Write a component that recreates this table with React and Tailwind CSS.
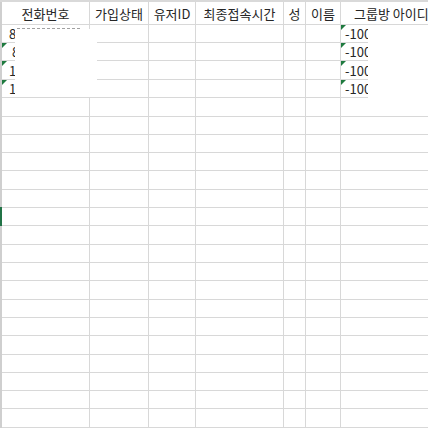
import React from "react";

const rowHeights = [
  "h-[18px]", "h-[18px]", "h-[19px]", "h-[18px]", "h-[19px]", "h-[18px]", "h-[18px]",
  "h-[18px]", "h-[19px]", "h-[18px]", "h-[18px]", "h-[19px]", "h-[18px]", "h-[18px]",
  "h-[19px]", "h-[18px]", "h-[18px]", "h-[19px]", "h-[18px]", "h-[18px]", "h-[18px]",
  "h-[19px]",
];

const colW = ["w-[88px]", "w-[59px]", "w-[47px]", "w-[88px]", "w-[22px]", "w-[35px]"];

const headers = ["전화번호", "가입상태", "유저ID", "최종접속시간", "성", "이름"];

function Tri() {
  return (
    <span className="absolute left-0 top-0 w-0 h-0 border-t-[5px] border-t-[#1f7a3f] border-r-[5px] border-r-transparent" />
  );
}

function Row({ h, a, g }) {
  return (
    <div className={`flex ${h} border-b border-[#d8d8d8]`}>
      <div className={`${colW[0]} shrink-0 border-r border-[#d8d8d8] relative flex items-center`}>
        {a && a.tri && <Tri />}
        {a && <span className={a.pl}>{a.t}</span>}
      </div>
      {colW.slice(1).map((w, i) => (
        <div key={i} className={`${w} shrink-0 border-r border-[#d8d8d8]`} />
      ))}
      <div className="flex-1 relative flex items-center">
        {g && <Tri />}
        {g && <span className="pl-[4px]">-1000000</span>}
      </div>
    </div>
  );
}

export default function App() {
  const data = [
    { a: { t: "8", pl: "pl-[7px]", tri: false }, g: true },
    { a: { t: "8", pl: "pl-[10px]", tri: true }, g: true },
    { a: { t: "1", pl: "pl-[7px]", tri: true }, g: true },
    { a: { t: "1", pl: "pl-[7px]", tri: true }, g: true },
  ];
  return (
    <div
      className="relative w-[428px] h-[428px] overflow-hidden bg-white text-[13px] text-[#262626] leading-none"
      style={{ fontFamily: '"Noto Sans CJK KR", "Noto Sans", sans-serif' }}
    >
      <div className="h-[2px] bg-[#d9d9d9]" />
      <div className="border-l-2 border-[#cfcfcf]">
        <div className="flex h-[23px] border-b border-[#d8d8d8]">
          {headers.map((t, i) => (
            <div
              key={i}
              className={`${colW[i]} shrink-0 border-r border-[#d8d8d8] flex items-center justify-center whitespace-nowrap overflow-hidden`}
            >
              {t}
            </div>
          ))}
          <div className="flex-1 flex items-center pl-[13px] whitespace-nowrap overflow-hidden">
            그룹방 아이디
          </div>
        </div>
        {rowHeights.map((h, i) => (
          <Row key={i} h={h} a={data[i] && data[i].a} g={data[i] && data[i].g} />
        ))}
      </div>

      <div className="absolute left-[15px] top-[29px] w-[82px] h-[68px] bg-white" />
      <div className="absolute left-[17px] top-[28px] w-[63px] border-t border-dashed border-[#a0a0a0]" />
      <div className="absolute left-[368px] top-[25px] w-[60px] h-[73px] bg-white" />
      <div className="absolute left-0 top-[207px] w-[2px] h-[19px] bg-[#217346]" />
    </div>
  );
}
